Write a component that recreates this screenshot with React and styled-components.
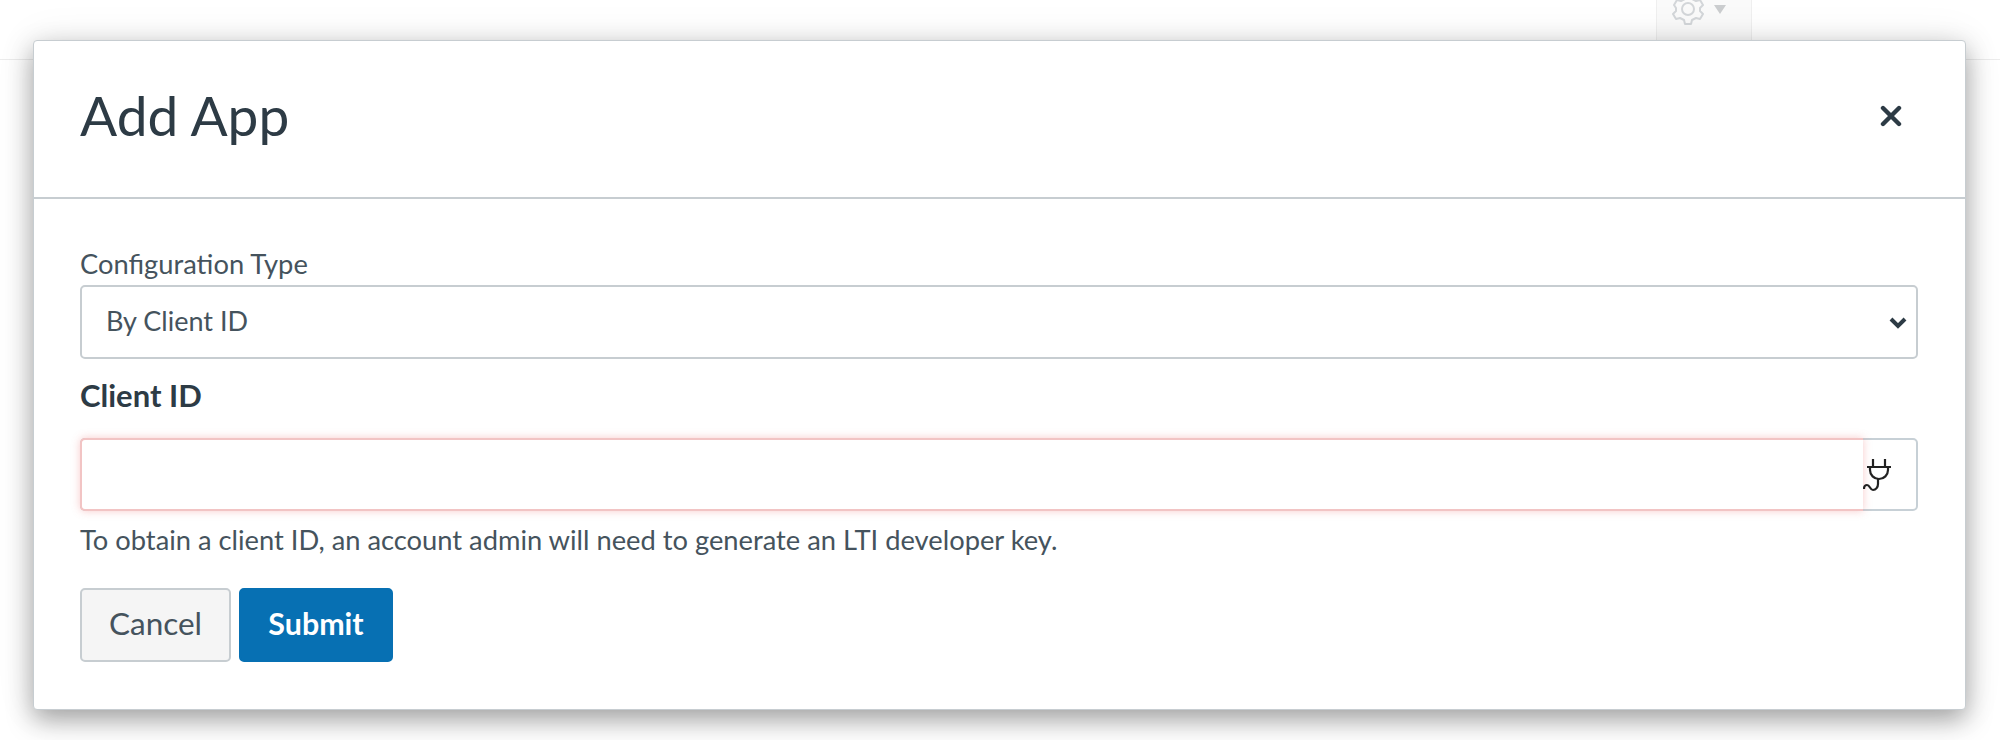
import React from 'react'
import styled, { createGlobalStyle } from 'styled-components'

const GlobalStyle = createGlobalStyle`
  html, body {
    margin: 0;
    padding: 0;
    background: #fff;
    font-family: Lato, "Open Sans", sans-serif;
    color: #2d3b45;
  }
`

const Page = styled.div`
  position: relative;
  width: 2000px;
  height: 740px;
  overflow: hidden;
  background: #fff;
`

const TopBar = styled.div`
  height: 59px;
  border-bottom: 1px solid #ececec;
  display: flex;
  justify-content: flex-end;
  padding-right: 248px;
`

const SettingsButton = styled.div`
  flex: none;
  width: 96px;
  height: 80px;
  margin-top: -31px;
  box-sizing: border-box;
  border: 1px solid #efefef;
  border-radius: 3px;
  background: #fafafa;
  display: flex;
  align-items: center;
  padding-left: 15px;
  gap: 10px;
  color: #d3d6d9;
`

const Caret = styled.span`
  width: 0;
  height: 0;
  border-left: 6px solid transparent;
  border-right: 6px solid transparent;
  border-top: 9px solid #cbcdcf;
`

const Dialog = styled.div`
  position: absolute;
  top: 40px;
  left: 33px;
  width: 1933px;
  height: 670px;
  box-sizing: border-box;
  background: #fff;
  border: 1px solid #c7cdd1;
  border-radius: 4px;
  box-shadow: 0 10px 26px rgba(0, 0, 0, .34), 0 0 40px rgba(0, 0, 0, .08);
`

const DialogHeader = styled.header`
  height: 158px;
  box-sizing: border-box;
  border-bottom: 2px solid #c7cdd1;
  padding: 0 63px 6px 46px;
  display: flex;
  align-items: center;
  justify-content: space-between;
`

const Title = styled.h1`
  margin: -2px 0 0;
  font-size: 55px;
  font-weight: 400;
  line-height: 1;
  color: #2d3b45;
`

const CloseButton = styled.button`
  border: 0;
  padding: 0;
  background: none;
  display: flex;
  color: #2d3b45;
`

const DialogBody = styled.div`
  padding: 49px 47px 0 46px;
  display: flex;
  flex-direction: column;
`

const FieldLabel = styled.label`
  line-height: 32px;
  color: ${p => (p.$strong ? '#2d3b45' : '#45535d')};
  font-weight: ${p => (p.$strong ? 700 : 400)};
  font-size: ${p => (p.$strong ? '31px' : '27.3px')};
  margin: ${p => (p.$strong ? '20px 0 27px' : '0 0 5px')};
`

const SelectWrap = styled.div`
  position: relative;
  display: flex;
`

const Select = styled.select`
  appearance: none;
  width: 100%;
  height: 74px;
  box-sizing: border-box;
  padding: 0 24px 4px;
  border: 2px solid #c7cdd1;
  border-radius: 5px;
  background: #fff;
  font: 400 27px Lato, sans-serif;
  color: #45535d;
`

const Chevron = styled.svg`
  position: absolute;
  top: 31px;
  right: 11px;
  pointer-events: none;
`

const InputGroup = styled.div`
  display: flex;
  height: 73px;
  box-sizing: border-box;
  border: 2px solid #c7d0d6;
  border-radius: 5px;
  background: #fff;
`

const ClientInput = styled.input`
  flex: 1;
  min-width: 0;
  margin: -2px 0 -2px -2px;
  box-sizing: border-box;
  border: 2px solid #f2c4c4;
  border-right: 0;
  border-radius: 5px 0 0 5px;
  outline: 0;
  background: #fff;
  box-shadow: 0 0 9px rgba(233, 100, 100, .34);
  font: 400 27px Lato, sans-serif;
`

const PlugAddon = styled.span`
  width: 53px;
  display: flex;
  align-items: center;
  color: #222;
`

const Hint = styled.p`
  margin: 13px 0 0;
  font-size: 27.3px;
  line-height: 32px;
  color: #45535d;
`

const Actions = styled.div`
  display: flex;
  gap: 8px;
  margin-top: 32px;
`

const Button = styled.button`
  height: 74px;
  box-sizing: border-box;
  border-radius: 5px;
  padding: 0 0 4px;
  font: ${p => (p.$primary ? 700 : 400)} ${p => (p.$primary ? '30.4px' : '31.5px')} Lato, sans-serif;
  color: ${p => (p.$primary ? '#fff' : '#45535d')};
  background: ${p => (p.$primary ? '#0770b3' : '#f5f5f5')};
  border: 2px solid ${p => (p.$primary ? '#0770b3' : '#c7cdd1')};
  width: ${p => (p.$primary ? '154px' : '151px')};
`

export default function App() {
  return (
    <Page>
      <GlobalStyle />
      <TopBar>
        <SettingsButton>
          <svg width="32" height="34" viewBox="0 0 32 34" fill="none" stroke="currentColor" strokeWidth="2">
            <circle cx="16" cy="17" r="6" />
            <path d="M13 3h6l1 4 4 2 4-1 3 5-3 3v3l3 3-3 5-4-1-4 2-1 4h-6l-1-4-4-2-4 1-3-5 3-3v-3L2 13l3-5 4 1 4-2z" strokeLinejoin="round" />
          </svg>
          <Caret />
        </SettingsButton>
      </TopBar>

      <Dialog>
        <DialogHeader>
          <Title>Add App</Title>
          <CloseButton>
            <svg width="22" height="22" viewBox="0 0 22 22" stroke="currentColor" strokeWidth="4.4" strokeLinecap="round">
              <path d="M3 3l16 16M19 3L3 19" />
            </svg>
          </CloseButton>
        </DialogHeader>

        <DialogBody>
          <FieldLabel>Configuration Type</FieldLabel>
          <SelectWrap>
            <Select defaultValue="client">
              <option value="client">By Client ID</option>
            </Select>
            <Chevron width="18" height="13" viewBox="0 0 18 13" fill="none" stroke="#2d3b45" strokeWidth="4">
              <path d="M2 3l7 7 7-7" />
            </Chevron>
          </SelectWrap>

          <FieldLabel $strong>Client ID</FieldLabel>
          <InputGroup>
            <ClientInput />
            <PlugAddon>
              <svg width="30" height="36" viewBox="0 0 30 36" fill="none" stroke="currentColor" strokeWidth="2.2">
                <path d="M10 2v9M22 2v9M4 10h24" />
                <path d="M7 10v3c0 5 4 9 9 9s9-4 9-9v-3" />
                <path d="M15 22v5c0 3-2 6-5 6s-3-5-6-5-3 2-3 4" />
              </svg>
            </PlugAddon>
          </InputGroup>
          <Hint>To obtain a client ID, an account admin will need to generate an LTI developer key.</Hint>

          <Actions>
            <Button>Cancel</Button>
            <Button $primary>Submit</Button>
          </Actions>
        </DialogBody>
      </Dialog>
    </Page>
  )
}
